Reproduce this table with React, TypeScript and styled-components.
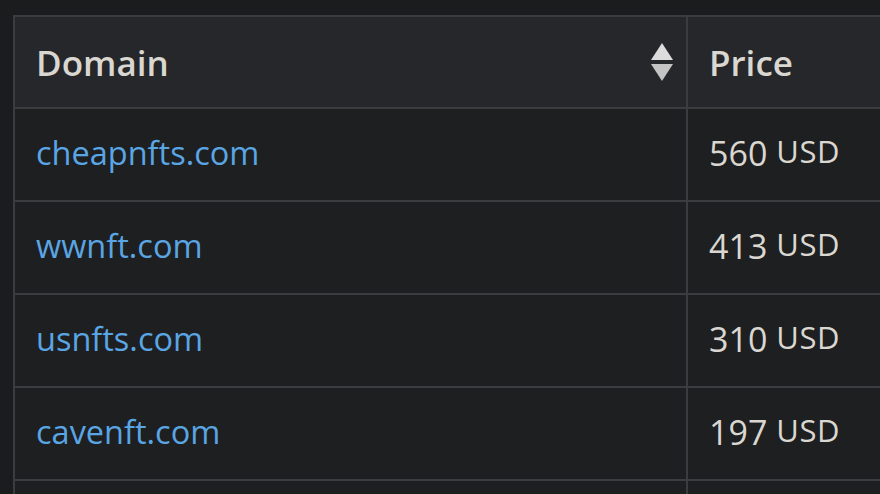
import React from "react";
import styled, { createGlobalStyle } from "styled-components";

const Global = createGlobalStyle`
  html, body { margin: 0; padding: 0; background: #1b1c1e; overflow: hidden; }
  body { font-family: "Open Sans", "Noto Sans", sans-serif; }
`;

const Page = styled.div`
  width: 880px;
  height: 494px;
  overflow: hidden;
  padding: 15px 0 0 13px;
  box-sizing: border-box;
`;

const Table = styled.table`
  border-collapse: collapse;
  table-layout: fixed;
  width: 1000px;
  border: 2px solid #3b3c3f;
`;

const HeadCell = styled.th<{ $w: number }>`
  width: ${(p) => p.$w}px;
  height: 92px;
  box-sizing: border-box;
  padding: 0 12px 0 21px;
  background: #26272a;
  color: #dad7d1;
  font-size: 35px;
  font-weight: 600;
  text-align: left;
  border: 2px solid #3b3c3f;
  vertical-align: middle;
`;

const HeadInner = styled.div`
  display: flex;
  align-items: center;
  justify-content: space-between;
`;

const Row = styled.tr`
  background: #1e1f21;
`;

const Cell = styled.td`
  height: 93px;
  box-sizing: border-box;
  padding: 0 12px 4px 21px;
  border: 2px solid #3b3c3f;
  vertical-align: middle;
`;

const Link = styled.a`
  color: #5aa5e4;
  font-size: 32.5px;
  text-decoration: none;
`;

const Amount = styled.span`
  color: #dad7d1;
  font-size: 34px;
`;

const Currency = styled.span`
  color: #dad7d1;
  font-size: 31px;
  margin-left: 9px;
  position: relative;
  top: -3px;
  letter-spacing: 0.5px;
`;

const SortIcon = () => (
  <svg width="24" height="40" viewBox="0 0 24 40">
    <path d="M12 1 L23 18 L1 18 Z" fill="#dcdcdc" />
    <path d="M1 22 L23 22 L12 39 Z" fill="#c4c4c4" />
  </svg>
);

const rows = [
  { domain: "cheapnfts.com", price: 560 },
  { domain: "wwnft.com", price: 413 },
  { domain: "usnfts.com", price: 310 },
  { domain: "cavenft.com", price: 197 },
];

export default function App() {
  return (
    <Page>
      <Global />
      <Table>
        <thead>
          <tr>
            <HeadCell $w={673}>
              <HeadInner>
                <span>Domain</span>
                <SortIcon />
              </HeadInner>
            </HeadCell>
            <HeadCell $w={327}>Price</HeadCell>
          </tr>
        </thead>
        <tbody>
          {rows.map((r) => (
            <Row key={r.domain}>
              <Cell>
                <Link href="#">{r.domain}</Link>
              </Cell>
              <Cell>
                <Amount>{r.price}</Amount>
                <Currency>USD</Currency>
              </Cell>
            </Row>
          ))}
          <Row>
            <Cell />
            <Cell />
          </Row>
        </tbody>
      </Table>
    </Page>
  );
}
